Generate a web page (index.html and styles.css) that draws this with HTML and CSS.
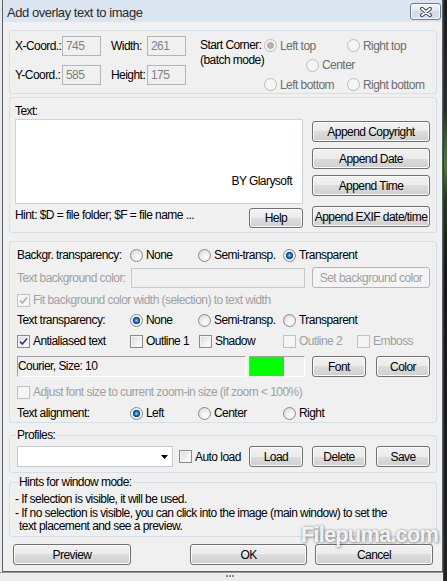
FILE: index.html
```html
<!DOCTYPE html>
<html lang="en">
<head>
<meta charset="utf-8">
<title>Add overlay text to image</title>
<link rel="stylesheet" href="styles.css">
</head>
<body>
<div class="screen">
  <div class="left">
    <div class="window">
      <div class="titlebar">
        <span class="title">Add overlay text to image</span>
        <span class="close"><svg width="14" height="10" viewBox="0 0 14 10"><path d="M3 1.8 L11 8.2 M11 1.8 L3 8.2" stroke="#3b4450" stroke-width="3.8" stroke-linecap="round"/><path d="M3 1.8 L11 8.2 M11 1.8 L3 8.2" stroke="#ffffff" stroke-width="1.8" stroke-linecap="round"/></svg></span>
      </div>
      <div class="client">
        <div class="group g1">
          <div class="coords">
            <span>X-Coord.:</span><span class="edit dis">745</span><span></span><span>Width:</span><span class="edit dis">261</span>
            <span>Y-Coord.:</span><span class="edit dis">585</span><span></span><span>Height:</span><span class="edit dis">175</span>
          </div>
          <div class="corner-lbl">Start Corner:<br>(batch mode)</div>
          <div class="corners">
            <label class="opt dis c-lt"><span class="radio on"></span>Left top</label>
            <label class="opt dis c-rt"><span class="radio"></span>Right top</label>
            <label class="opt dis c-c"><span class="radio"></span>Center</label>
            <label class="opt dis c-lb"><span class="radio"></span>Left bottom</label>
            <label class="opt dis c-rb"><span class="radio"></span>Right bottom</label>
          </div>
        </div>

        <div class="group g2">
          <div class="textcol">
            <div class="line">Text:</div>
            <div class="memo">BY Glarysoft</div>
            <div class="hintrow">
              <span class="line">Hint: $D = file folder; $F = file name ...</span>
              <button class="btn help">Help</button>
            </div>
          </div>
          <div class="btncol">
            <button class="btn">Append Copyright</button>
            <button class="btn mt6">Append Date</button>
            <button class="btn mt6">Append Time</button>
            <button class="btn mt10">Append EXIF date/time</button>
          </div>
        </div>

        <div class="group g3">
          <div class="row">
            <span class="w113">Backgr. transparency:</span>
            <label class="opt w68"><span class="radio"></span>None</label>
            <label class="opt w85"><span class="radio"></span>Semi-transp.</label>
            <label class="opt"><span class="radio on"></span>Transparent</label>
          </div>
          <div class="row tall mt5">
            <span class="w114 gray">Text background color:</span>
            <span class="edit off w174"></span>
            <button class="btn disabled ml7 w118">Set background color</button>
          </div>
          <div class="row mt5">
            <label class="opt gray"><span class="check dis"><svg width="11" height="11" viewBox="0 0 11 11"><path d="M2 5.6 L4.4 8 L9 2.6" fill="none" stroke="#a9a9a9" stroke-width="1.5"/></svg></span>Fit background color width (selection) to text width</label>
          </div>
          <div class="row mt6">
            <span class="w113">Text transparency:</span>
            <label class="opt w68"><span class="radio on"></span>None</label>
            <label class="opt w85"><span class="radio"></span>Semi-transp.</label>
            <label class="opt"><span class="radio"></span>Transparent</label>
          </div>
          <div class="row mt7">
            <label class="opt w113"><span class="check"><svg width="11" height="11" viewBox="0 0 11 11"><path d="M2 5.6 L4.4 8 L9 2.6" fill="none" stroke="#2c3f77" stroke-width="1.6"/></svg></span>Antialiased text</label>
            <label class="opt w69"><span class="check"></span>Outline 1</label>
            <label class="opt w84"><span class="check"></span>Shadow</label>
            <label class="opt w74 gray"><span class="check dis"></span>Outline 2</label>
            <label class="opt gray"><span class="check dis"></span>Emboss</label>
          </div>
          <div class="row tall mt8">
            <div class="panel font w229">Courier, Size: 10</div>
            <div class="panel swatch ml3 w56"><span class="green"></span></div>
            <button class="btn ml7 w54">Font</button>
            <button class="btn ml10 w54">Color</button>
          </div>
          <div class="row mt8">
            <label class="opt gray"><span class="check dis"></span>Adjust font size to current zoom-in size (if zoom &lt; 100%)</label>
          </div>
          <div class="row mt7">
            <span class="w113">Text alignment:</span>
            <label class="opt w68"><span class="radio on"></span>Left</label>
            <label class="opt w85"><span class="radio"></span>Center</label>
            <label class="opt"><span class="radio"></span>Right</label>
          </div>
        </div>

        <fieldset class="group g4">
          <legend>Profiles:</legend>
          <div class="row tall">
            <div class="combo w156"><svg width="7" height="4" viewBox="0 0 7 4"><path d="M0 0 H7 L3.5 4 Z" fill="#000"/></svg></div>
            <label class="opt ml6 w70"><span class="check"></span>Auto load</label>
            <button class="btn w54">Load</button>
            <button class="btn ml9 w54">Delete</button>
            <button class="btn ml10 w54">Save</button>
          </div>
        </fieldset>

        <fieldset class="group g5">
          <legend>Hints for window mode:</legend>
          <div class="line">- If selection is visible, it will be used.</div>
          <div class="para">
            <div>- If no selection is visible, you can click into the image (main window) to set the</div>
            <div class="indent">text placement and see a preview.</div>
          </div>
        </fieldset>

        <div class="actions">
          <button class="btn w118 ml4">Preview</button>
          <button class="btn w117 ml59">OK</button>
          <button class="btn w118 ml8">Cancel</button>
        </div>
      </div>
      <div class="watermark">Filepuma.com</div>
    </div>
    <div class="strip"><span class="grip"><i></i><i></i><i></i></span></div>
  </div>
  <div class="desktop"></div>
</div>
</body>
</html>
```
FILE: styles.css
```css
* { box-sizing: border-box; }
html, body { margin: 0; padding: 0; }
body {
  width: 447px;
  height: 581px;
  overflow: hidden;
  background: #e9e9e9;
  font-family: "Liberation Sans", Arial, sans-serif;
  font-size: 12px;
  letter-spacing: -0.55px;
  color: #000;
}
.screen { display: flex; height: 581px; }
.left {
  width: 443px;
  flex: none;
  display: flex;
  flex-direction: column;
  background: #e9e9e9;
}
.desktop {
  flex: 1;
  background: linear-gradient(#1c1c1c 0, #2b2b2b 110px, #3d6a2c 145px, #4f7a36 165px, #26361e 200px, #171717 270px, #222 581px);
  border-left: 1px solid #3a3a3a;
}
.window {
  position: relative;
  margin-left: 2px;
  width: 441px;
  height: 572px;
  flex: none;
  border: 1px solid #56606b;
  border-top: 0;
  display: flex;
  flex-direction: column;
  background: #f0f0f0;
}
.titlebar {
  height: 22px;
  flex: none;
  display: flex;
  align-items: flex-start;
  background: #dbe5f1;
}
.title {
  flex: 1;
  margin: 5px 0 0 4px;
  font-size: 13px;
  line-height: 15px;
  letter-spacing: -0.45px;
  color: #2b2b2b;
}
.close {
  width: 31px;
  height: 17px;
  margin: 3px 1px 0 0;
  border: 1px solid #6f7c8e;
  border-radius: 3px;
  background: linear-gradient(#f3f6fa, #e0e7f0 50%, #d0dae7 50%, #d9e2ed);
  box-shadow: inset 0 0 0 1px rgba(255,255,255,0.7);
  display: flex;
  align-items: center;
  justify-content: center;
}
.client {
  flex: 1;
  display: flex;
  flex-direction: column;
  padding: 8px 5px 0 6px;
}
.group {
  border: 1px solid #d5dfe5;
  border-radius: 3px;
}
.group { min-inline-size: 0; }
.group legend { line-height: 14px; padding: 0 1px; }

.g1 { height: 64px; display: flex; align-items: flex-start; padding: 5px 0 0 5px; }
.g2 { height: 136px; margin-top: 3px; display: flex; align-items: flex-start; padding: 6px 0 0 5px; }
.g3 { height: 182px; margin-top: 8px; padding: 6px 0 0 7px; }
.g4 { margin: 5px 0 0 0; padding: 4px 0 5px 7px; }
.g4 legend { margin-left: -1px; }
.g5 { margin: 2px 0 0 0; padding: 3px 0 3px 5px; }
.g5 legend { margin-left: 3px; }

/* group 1 */
.coords {
  display: grid;
  grid-template-columns: 47px 39px 10px 36px 39px;
  grid-template-rows: 20px 20px;
  row-gap: 9px;
  align-items: center;
  flex: none;
}
.edit {
  height: 20px;
  border: 1px solid #b5b5b5;
  background: #f0f0f0;
  line-height: 18px;
  padding-left: 3px;
}
.edit.dis { color: #808080; }
.edit.off { border-color: #c9c9c9; }
.corner-lbl { width: 64px; margin: 2px 0 0 14px; line-height: 15px; flex: none; white-space: nowrap; }
.corners {
  display: grid;
  grid-template-columns: 42px 41px auto;
  grid-template-rows: 19px 20px 19px;
  align-items: center;
}
.c-lt { grid-area: 1 / 1 / 2 / 3; }
.c-rt { grid-area: 1 / 3 / 2 / 4; }
.c-c { grid-area: 2 / 2 / 3 / 4; }
.c-lb { grid-area: 3 / 1 / 4 / 3; }
.c-rb { grid-area: 3 / 3 / 4 / 4; }

/* options */
.opt { display: flex; align-items: center; white-space: nowrap; flex: none; }
.opt.dis { color: #6d6d6d; }
.radio {
  width: 13px;
  height: 13px;
  flex: none;
  margin-right: 3px;
  border-radius: 50%;
  border: 1px solid #8b8b8b;
  background: radial-gradient(circle at 62% 68%, #ffffff 0, #efefef 40%, #d2d2d2 100%);
}
.radio.on {
  background: radial-gradient(circle, #8fd8fb 0, #2f92da 1.4px, #12509e 2.8px, #1b4a84 3.4px, #eaeaea 4px, #f4f4f4 5px, #d4d4d4 100%);
}
.dis .radio { border-color: #bcbcbc; background: #f5f5f5; }
.dis .radio.on { background: radial-gradient(circle, #bdbdbd 0, #a9a9a9 2.8px, #d8d8d8 3.5px, #f5f5f5 4.2px); }
.check {
  width: 13px;
  height: 13px;
  flex: none;
  margin-right: 3px;
  border: 1px solid #8b8b8b;
  background: linear-gradient(135deg, #d9d9d9, #f6f6f6 70%, #ffffff);
  box-shadow: inset 0 0 0 1px #f4f4f4;
  display: flex;
}
.check.dis { border-color: #c2c2c2; background: #f5f5f5; box-shadow: none; }

/* group 2 */
.textcol { width: 288px; flex: none; display: flex; flex-direction: column; }
.line { line-height: 14px; }
.memo {
  margin-top: 1px;
  height: 85px;
  background: #fff;
  border: 1px solid #cfd3d8;
  padding: 54px 10px 0 0;
  line-height: 14px;
  text-align: right;
}
.hintrow { margin-top: 4px; display: flex; justify-content: space-between; align-items: flex-start; }
.btncol { width: 118px; margin: 17px 0 0 9px; display: flex; flex-direction: column; flex: none; }

/* buttons */
.btn {
  height: 21px;
  padding: 0;
  margin: 0;
  font: inherit;
  letter-spacing: inherit;
  color: #000;
  border: 1px solid #707070;
  border-radius: 3px;
  background: linear-gradient(#f2f2f2 0, #ebebeb 50%, #dddddd 50%, #cfcfcf 100%);
  box-shadow: inset 0 0 0 1px #fbfbfb;
  display: flex;
  align-items: center;
  justify-content: center;
  white-space: nowrap;
  flex: none;
}
.btn.help { width: 54px; height: 20px; }
.btn.disabled { border-color: #b3b7ba; background: #f4f4f4; box-shadow: none; color: #a0a0a0; }

/* group 3 rows */
.row { display: flex; align-items: center; height: 14px; }
.row.tall { height: 21px; }
.gray { color: #a0a0a0; }
.panel {
  height: 21px;
  border-top: 1px solid #a0a0a0;
  border-left: 1px solid #a0a0a0;
  border-bottom: 1px solid #ffffff;
  border-right: 1px solid #ffffff;
  background: #f0f0f0;
  flex: none;
}
.panel.font { padding-left: 0; line-height: 19px; }
.panel.swatch { display: flex; }
.green { width: 34px; height: 100%; background: #00ff00; }
.combo {
  height: 21px;
  flex: none;
  background: #fff;
  border: 1px solid #c5c8cc;
  display: flex;
  align-items: center;
  justify-content: flex-end;
  padding-right: 4px;
}
.para { margin-top: 1px; line-height: 13px; }
.indent { padding-left: 4px; }

.actions { display: flex; margin-top: 7px; }

/* sizes and offsets */
.w54 { width: 54px; }
.w56 { width: 56px; }
.w68 { width: 68px; }
.w69 { width: 69px; }
.w70 { width: 70px; }
.w74 { width: 74px; }
.w84 { width: 84px; }
.w85 { width: 85px; }
.w113 { width: 113px; flex: none; }
.w114 { width: 114px; flex: none; }
.w117 { width: 117px; }
.w118 { width: 118px; }
.w156 { width: 156px; }
.w174 { width: 174px; flex: none; }
.w229 { width: 229px; }
.ml3 { margin-left: 3px; }
.ml4 { margin-left: 4px; }
.ml6 { margin-left: 6px; }
.ml7 { margin-left: 7px; }
.ml8 { margin-left: 8px; }
.ml9 { margin-left: 9px; }
.ml10 { margin-left: 10px; }
.ml59 { margin-left: 59px; }
.mt5 { margin-top: 5px; }
.mt6 { margin-top: 6px; }
.mt7 { margin-top: 7px; }
.mt8 { margin-top: 8px; }
.mt10 { margin-top: 10px; }

.watermark {
  position: absolute;
  left: 298px;
  top: 524px;
  font-size: 22px;
  line-height: 22px;
  font-weight: bold;
  letter-spacing: -0.9px;
  color: rgba(255,255,255,0.9);
  text-shadow: 0 0 3px rgba(0,0,0,0.35), 1px 1px 3px rgba(0,0,0,0.3);
  pointer-events: none;
}
.strip {
  flex: 1;
  display: flex;
  justify-content: center;
  padding: 2px 0 0 16px;
  border-top: 1px solid #9a9a9a;
  background: #ececec;
}
.grip { display: flex; gap: 1px; height: 2px; }
.grip i { width: 2px; height: 2px; background: #8a8a8a; }
```
